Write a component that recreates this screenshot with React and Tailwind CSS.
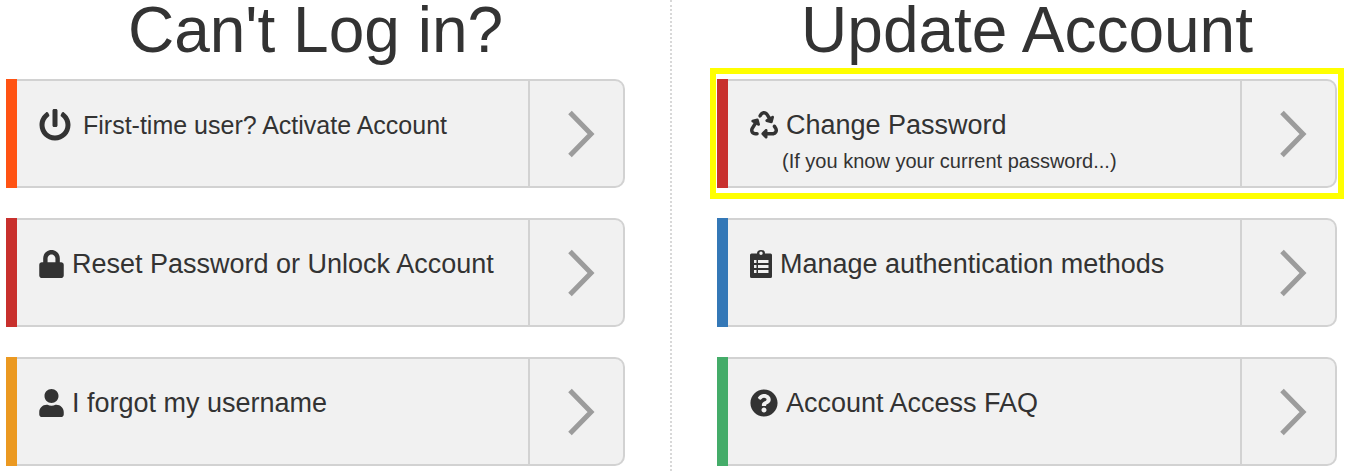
import React from 'react';
import { FaLock, FaPowerOff, FaQuestionCircle, FaUser } from 'react-icons/fa';
import { FaRecycle } from 'react-icons/fa6';

function ClipboardIcon({ className }) {
  return (
    <svg viewBox="0 0 22 28" className={className} fill="currentColor" aria-hidden="true">
      <path
        fillRule="evenodd"
        d="M1.500 3.500h5.500a4 3.500 0 0 1 8 0H20.500a1.500 1.500 0 0 1 1.500 1.500v21.500a1.500 1.500 0 0 1-1.500 1.500H1.500a1.500 1.500 0 0 1-1.500-1.500V5a1.500 1.500 0 0 1 1.500-1.500zM11 1.500a1.700 1.700 0 1 0 0 3.400a1.700 1.700 0 0 0 0-3.400zM4 10v3h2.500v-3zM8 10v3h10.500v-3zM4 15v3h2.500v-3zM8 15v3h10.500v-3zM4 20v3h2.500v-3zM8 20v3h10.500v-3z"
      />
    </svg>
  );
}

const loginLinks = [
  {
    label: 'First-time user? Activate Account',
    icon: <FaPowerOff className="size-8 shrink-0" />,
    bar: 'bg-[#ff5313]',
    text: 'gap-3 text-[25px]',
  },
  {
    label: 'Reset Password or Unlock Account',
    icon: <FaLock className="h-7 w-[25px] shrink-0" />,
    bar: 'bg-[#c8302d]',
    text: 'gap-2 text-[27px]',
  },
  {
    label: 'I forgot my username',
    icon: <FaUser className="h-7 w-[25px] shrink-0" />,
    bar: 'bg-[#eb9921]',
    text: 'gap-2 text-[27px]',
  },
];

const accountLinks = [
  {
    label: 'Change Password',
    note: '(If you know your current password...)',
    icon: <FaRecycle className="size-7 shrink-0" />,
    bar: 'bg-[#c8302d]',
    text: 'gap-2 text-[27px]',
    highlighted: true,
  },
  {
    label: 'Manage authentication methods',
    icon: <ClipboardIcon className="h-7 w-[22px] shrink-0" />,
    bar: 'bg-[#3478b7]',
    text: 'gap-2 text-[27px]',
  },
  {
    label: 'Account Access FAQ',
    icon: <FaQuestionCircle className="size-7 shrink-0" />,
    bar: 'bg-[#44ac69]',
    text: 'gap-2 text-[27px]',
  },
];

function LinkCard({ label, note, icon, bar, text, highlighted }) {
  return (
    <a href="#" className="relative flex min-h-[109px] text-[#333]">
      <span className={`w-[11px] shrink-0 ${bar}`} />
      <span className="flex flex-1 rounded-r-[10px] border-2 border-l-0 border-[#d2d2d2] bg-[#f1f1f1]">
        <span className="flex-1 pt-[26px] pl-[22px]">
          <span className={`flex items-center leading-9 ${text}`}>
            {icon}
            {label}
          </span>
          {note && <span className="block pl-8 text-[20px] leading-9">{note}</span>}
        </span>
        <span className="flex w-[95px] shrink-0 items-center border-l-2 border-[#d2d2d2] pl-[38px]">
          <svg viewBox="0 0 28 48" className="h-12 w-7" fill="none" stroke="#9c9c9c" strokeWidth="5" aria-hidden="true">
            <path d="M2 2.500L23 24L2 45.500" />
          </svg>
        </span>
      </span>
      {highlighted && (
        <span className="pointer-events-none absolute -inset-x-[7px] -inset-y-[11px] border-6 border-[#ffff00]" />
      )}
    </a>
  );
}

function LinkColumn({ title, links, className }) {
  return (
    <section className={className}>
      <h1 className="mb-[19px] text-center text-[64px] leading-[60px] text-[#333]">{title}</h1>
      <div className="flex flex-col gap-[30px]">
        {links.map(link => (
          <LinkCard key={link.label} {...link} />
        ))}
      </div>
    </section>
  );
}

export default function App() {
  return (
    <main className="grid grid-cols-[672fr_673fr] bg-white font-['Liberation_Sans',Arial,sans-serif]">
      <LinkColumn
        title="Can't Log in?"
        links={loginLinks}
        className="border-r-2 border-dotted border-[#d8d8d8] pr-[45px] pb-[5px] pl-1.5"
      />
      <LinkColumn title="Update Account" links={accountLinks} className="pr-2 pl-[45px]" />
    </main>
  );
}
